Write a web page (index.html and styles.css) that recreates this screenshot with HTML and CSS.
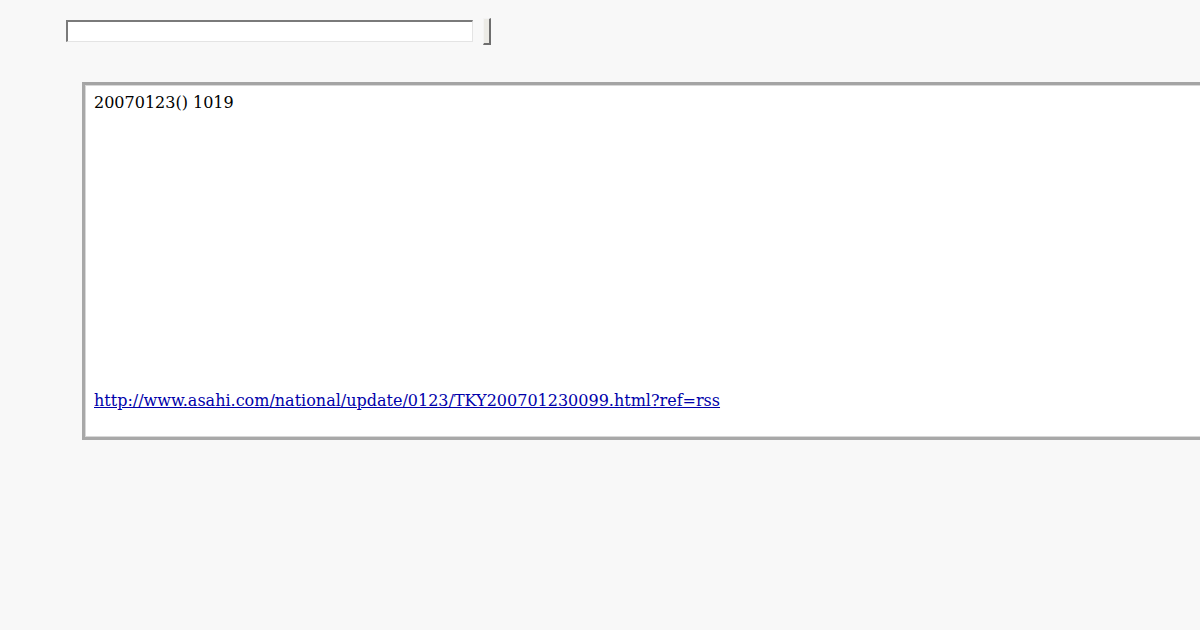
FILE: index.html
```html
<!DOCTYPE html>
<html>
<head>
<meta charset="utf-8">
<title>asahi</title>
<link rel="stylesheet" href="styles.css">
</head>
<body>
<form class="search">
  <input class="search-input" type="text">
  <button class="search-btn" type="button"></button>
</form>
<div class="entry">
  <div class="entry-date">20070123() 1019</div>
  <div class="entry-link"><a href="http://www.asahi.com/national/update/0123/TKY200701230099.html?ref=rss">http://www.asahi.com/national/update/0123/TKY200701230099.html?ref=rss</a></div>
</div>
</body>
</html>
```

FILE: styles.css
```css
html, body {
  margin: 0;
  padding: 0;
  background: #f8f8f8;
  overflow: hidden;
}
body {
  font-family: "DejaVu Serif", serif;
  font-size: 16px;
  color: #000;
  width: 1200px;
  height: 630px;
}
.search {
  display: flex;
  align-items: center;
  gap: 10px;
  margin: 0;
  padding: 18px 0 0 66px;
  height: 27px;
}
.search-input {
  box-sizing: border-box;
  width: 407px;
  height: 22px;
  margin: -1px 0 0 0;
  padding: 0;
  background: #fff;
  border-style: solid;
  border-width: 2px 1px 1px 2px;
  border-color: #7a7a7a #e4e4e4 #e4e4e4 #7a7a7a;
}
.search-btn {
  box-sizing: border-box;
  width: 8px;
  height: 27px;
  margin: 0;
  padding: 0;
  background: #ecebe6;
  border-style: solid;
  border-width: 1px 2px 2px 1px;
  border-color: #f4f4f4 #6e6e6e #6e6e6e #f4f4f4;
}
.entry {
  box-sizing: border-box;
  margin: 37px 0 0 82px;
  width: 1124px;
  height: 358px;
  background: #fff;
  border: 3px solid #a8a8a8;
  border-top-color: #a4a4a4;
  box-shadow: 0 0 0 1px #d8d8d8 inset;
  padding: 8px 9px 27px 9px;
  display: flex;
  flex-direction: column;
  justify-content: space-between;
  line-height: 19px;
}
.entry-link a {
  color: #0000aa;
  text-decoration: underline;
}
```
